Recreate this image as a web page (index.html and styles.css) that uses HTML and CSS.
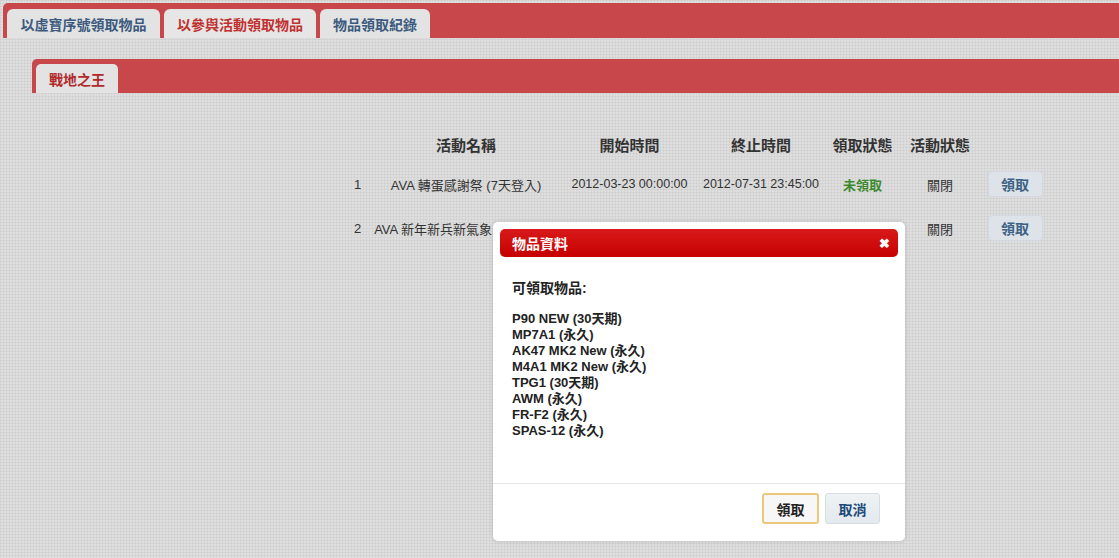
FILE: index.html
```html
<!DOCTYPE html>
<html lang="zh-TW">
<head>
    <meta charset="UTF-8">
    <title>領取物品</title>
    <link rel="stylesheet" href="styles.css">
</head>
<body>

<!-- 主分頁 -->
<div class="main-tabs">
    <a class="tab">以虛寶序號領取物品</a>
    <a class="tab active">以參與活動領取物品</a>
    <a class="tab">物品領取紀錄</a>
</div>

<div class="panel">
    <div class="sub-tabs">
        <a class="sub-tab active">戰地之王</a>
    </div>

    <div class="content">
        <table class="event-table">
            <thead>
                <tr>
                    <th class="col-no"></th>
                    <th class="col-name">活動名稱</th>
                    <th class="col-start">開始時間</th>
                    <th class="col-end">終止時間</th>
                    <th class="col-get">領取狀態</th>
                    <th class="col-state">活動狀態</th>
                    <th class="col-btn"></th>
                </tr>
            </thead>
            <tbody>
                <tr>
                    <td>1</td>
                    <td class="name">AVA 轉蛋感謝祭 (7天登入)</td>
                    <td class="date">2012-03-23 00:00:00</td>
                    <td class="date">2012-07-31 23:45:00</td>
                    <td class="status-no">未領取</td>
                    <td>關閉</td>
                    <td><button class="btn-get">領取</button></td>
                </tr>
                <tr>
                    <td>2</td>
                    <td class="name">AVA 新年新兵新氣象 (14天登入)</td>
                    <td class="date">2012-01-17 00:00:00</td>
                    <td class="date">2012-02-29 23:45:00</td>
                    <td class="status-no">未領取</td>
                    <td>關閉</td>
                    <td><button class="btn-get">領取</button></td>
                </tr>
            </tbody>
        </table>
    </div>
</div>

<!-- 物品資料 對話框 -->
<div class="dialog">
    <div class="dialog-title">
        <span>物品資料</span>
        <span class="dialog-close">&#10006;</span>
    </div>
    <div class="dialog-body">
        <p class="dialog-label">可領取物品:</p>
        <ul class="item-list">
            <li>P90 NEW (30天期)</li>
            <li>MP7A1 (永久)</li>
            <li>AK47 MK2 New (永久)</li>
            <li>M4A1 MK2 New (永久)</li>
            <li>TPG1 (30天期)</li>
            <li>AWM (永久)</li>
            <li>FR-F2 (永久)</li>
            <li>SPAS-12 (永久)</li>
        </ul>
    </div>
    <div class="dialog-footer">
        <button class="btn-ok">領取</button>
        <button class="btn-cancel">取消</button>
    </div>
</div>

</body>
</html>
```

FILE: styles.css
```css
* { margin: 0; padding: 0; box-sizing: border-box; }

body {
    font-family: "Liberation Sans", "Noto Sans CJK TC", sans-serif;
    font-size: 12px;
    color: #333;
    background-color: #dedede;
    background-image:
        linear-gradient(90deg, rgba(0,0,0,0.035) 1px, transparent 1px),
        linear-gradient(rgba(0,0,0,0.035) 1px, transparent 1px);
    background-size: 3px 3px;
    height: 558px;
    overflow: hidden;
}

/* 主分頁 */
.main-tabs {
    margin: 3px 0 0 3px;
    height: 35px;
    padding: 6px 0 0 4px;
    display: flex;
    gap: 4px;
    background-color: #c8474b;
    border-radius: 5px 0 0 0;
}
.tab {
    display: flex;
    align-items: center;
    justify-content: center;
    height: 29px;
    white-space: nowrap;
    background-color: #e3e3e3;
    border-radius: 6px 6px 0 0;
    font-size: 14px;
    font-weight: bold;
    color: #3b5a7e;
}
.tab:nth-child(1) { width: 153px; }
.tab:nth-child(2) { width: 152px; }
.tab:nth-child(3) { width: 110px; }
.tab.active { color: #c0302f; background-color: #e6e6e6; }

/* 內容區 */
.panel { padding: 21px 0 0 32px; }

.sub-tabs {
    height: 34px;
    padding: 5px 0 0 4px;
    display: flex;
    background-color: #c8474b;
    border-radius: 5px 0 0 0;
}
.sub-tab {
    display: flex;
    align-items: center;
    justify-content: center;
    width: 82px;
    height: 29px;
    background-color: #e3e3e3;
    border-radius: 5px 5px 0 0;
    font-size: 14px;
    font-weight: bold;
    color: #b02a2c;
}

.content { padding: 33px 0 0 313px; }

.event-table { border-collapse: collapse; table-layout: fixed; }
.event-table th {
    height: 36px;
    font-size: 15px;
    font-weight: bold;
    color: #333;
    text-align: center;
    white-space: nowrap;
}
.event-table td {
    height: 44px;
    text-align: center;
    white-space: nowrap;
    font-size: 13px;
    color: #333;
}
.col-no { width: 25px; }
.col-name { width: 192px; }
.col-start { width: 135px; }
.col-end { width: 128px; }
.col-get { width: 75px; }
.col-state { width: 80px; }
.col-btn { width: 70px; }

.event-table td.date { font-size: 12.5px; }
.event-table td.status-no { color: #3c8a2e; font-weight: bold; }

.btn-get {
    width: 55px;
    height: 26px;
    border: 1px solid #d3d9de;
    border-radius: 4px;
    background-color: #dde3e8;
    color: #3e6285;
    font-family: inherit;
    font-size: 14px;
    font-weight: bold;
}

/* 對話框 */
.dialog {
    position: absolute;
    left: 493px;
    top: 222px;
    width: 412px;
    height: 319px;
    padding: 7px 7px 0;
    background-color: #fff;
    border-radius: 5px;
    box-shadow: 0 0 4px rgba(0,0,0,0.15);
}
.dialog-title {
    display: flex;
    justify-content: space-between;
    align-items: center;
    height: 28px;
    padding: 0 8px 0 12px;
    border-radius: 5px;
    background: linear-gradient(#d81a1a, #c70000);
    color: #fff;
    font-size: 14px;
    font-weight: bold;
}
.dialog-close { font-size: 13px; }

.dialog-body {
    height: 226px;
    padding: 23px 0 0 12px;
    font-size: 13px;
    font-weight: bold;
    color: #222;
    line-height: 16px;
}
.dialog-label { font-size: 14px; margin-bottom: 15px; }
.item-list { list-style: none; }

.dialog-footer {
    margin: 0 -7px;
    height: 58px;
    border-top: 1px solid #e6e6e6;
    display: flex;
    justify-content: flex-end;
    gap: 6px;
    padding: 9px 25px 0 0;
}
.dialog-footer button {
    height: 31px;
    border-radius: 3px;
    font-family: inherit;
    font-size: 14px;
    font-weight: bold;
}
.btn-ok {
    width: 57px;
    border: 2px solid #ebc87a;
    background-color: #f7f7f7;
    color: #222;
}
.btn-cancel {
    width: 55px;
    border: 1px solid #d6dce2;
    background: linear-gradient(#eef2f5, #e3e9ee);
    color: #1e4a7a;
}
```
